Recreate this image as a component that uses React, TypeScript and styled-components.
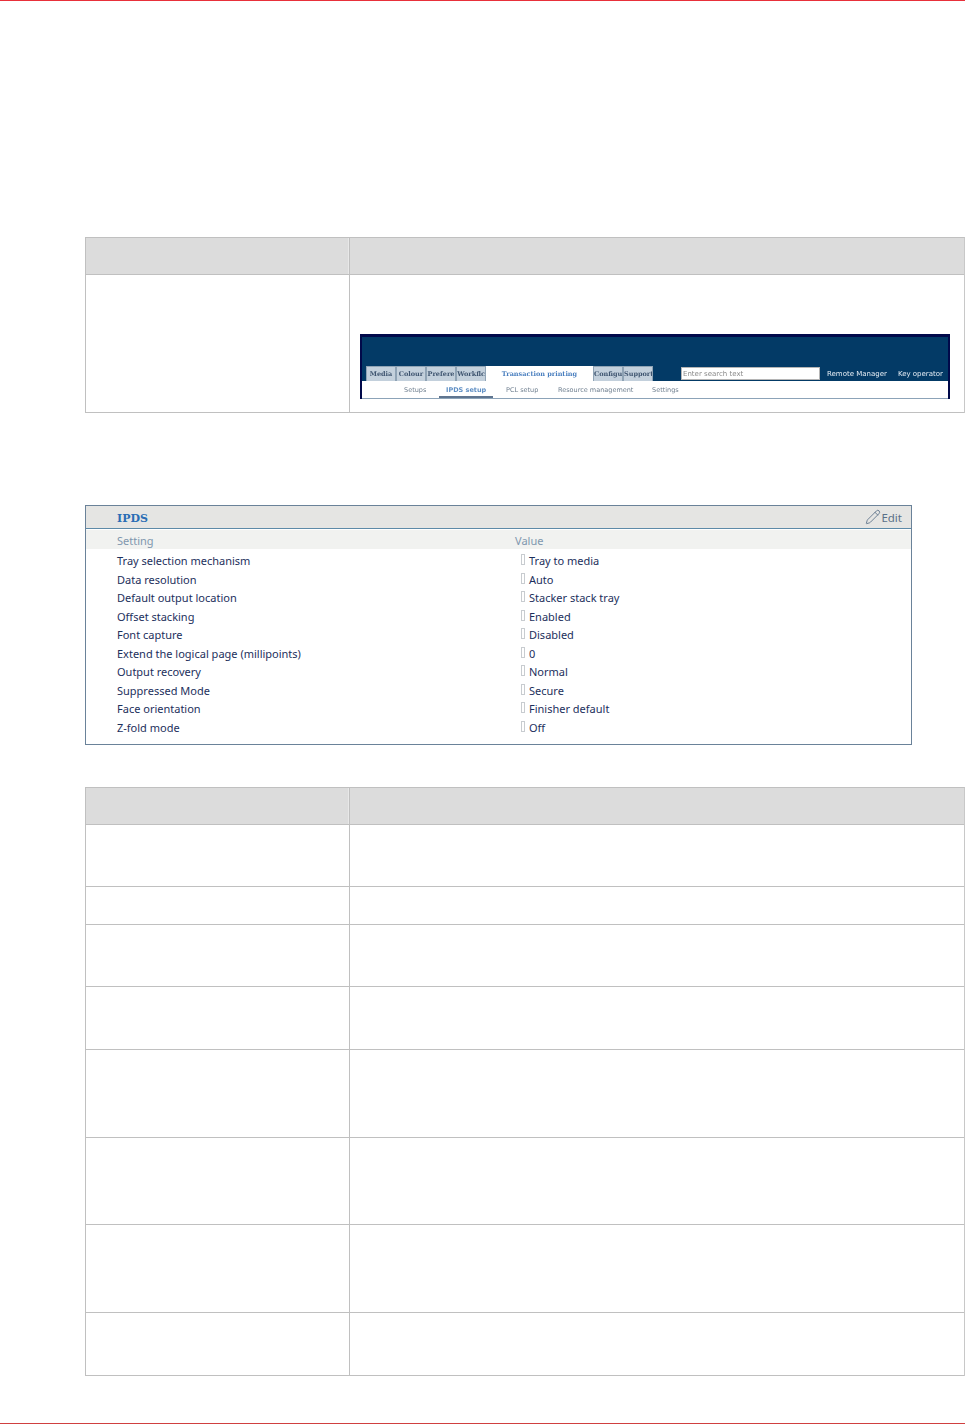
import React from 'react';
import styled, { createGlobalStyle } from 'styled-components';
import { Pencil } from 'lucide-react';

const settings = [
  ['Tray selection mechanism', 'Tray to media'],
  ['Data resolution', 'Auto'],
  ['Default output location', 'Stacker stack tray'],
  ['Offset stacking', 'Enabled'],
  ['Font capture', 'Disabled'],
  ['Extend the logical page (millipoints)', '0'],
  ['Output recovery', 'Normal'],
  ['Suppressed Mode', 'Secure'],
  ['Face orientation', 'Finisher default'],
  ['Z-fold mode', 'Off'],
];

const mainTabs = ['Media', 'Colour', 'Prefere', 'Workflc'];
const sideTabs = ['Configu', 'Support'];
const subNav = [
  { label: 'Setups', width: 35, after: 0, active: false },
  { label: 'IPDS setup', width: 54, after: 13, active: true },
  { label: 'PCL setup', width: 52, after: 0, active: false },
  { label: 'Resource management', width: 94, after: 0, active: false },
  { label: 'Settings', width: 60, after: 0, active: false },
];

const rowHeights = [62, 38, 62, 63, 88, 87, 88, 63];

const GlobalStyle = createGlobalStyle`
  html, body {
    margin: 0;
    padding: 0;
    background: #fff;
  }
`;

const Page = styled.div`
  width: 965px;
  height: 1424px;
  box-sizing: border-box;
  display: flex;
  flex-direction: column;
  overflow: hidden;
  font-family: 'Noto Sans', sans-serif;
  border-top: 1px solid #e8303a;
  border-bottom: 1px solid #d04040;
`;

const Table = styled.div<{ $top: number }>`
  margin: ${(p) => p.$top}px 0 0 85px;
  width: 880px;
  box-sizing: border-box;
  border-top: 1px solid #c0c0c0;
  border-left: 1px solid #c0c0c0;
  border-right: 1px solid #c8c8c8;
`;

const Row = styled.div<{ $height: number; $head?: boolean }>`
  display: grid;
  grid-template-columns: 263px 1fr;
  height: ${(p) => p.$height}px;
  box-sizing: border-box;
  border-bottom: 1px solid #c0c0c0;
  background: ${(p) => (p.$head ? '#dcdcdc' : '#fff')};
`;

const Cell = styled.div<{ $head?: boolean }>`
  border-left: 1px solid #c0c0c0;
  box-shadow: ${(p) => (p.$head ? '-1px 0 0 #e8e8e8' : 'none')};
  &:first-child {
    border-left: none;
    box-shadow: none;
  }
`;

const ShotCell = styled(Cell)`
  padding: 59px 0 0 10px;
`;

const Shot = styled.div`
  width: 590px;
  height: 65px;
  box-sizing: border-box;
  background: #033a66;
  border: solid #01094a;
  border-width: 3px 2px 0;
  padding-top: 29px;
  display: flex;
  flex-direction: column;
  font-family: 'DejaVu Sans', sans-serif;
  font-size: 7px;
  filter: blur(0.35px);
`;

const TabBar = styled.div`
  height: 15px;
  display: flex;
  padding-left: 4px;
  align-items: stretch;
`;

const Tab = styled.div`
  width: 30px;
  box-sizing: border-box;
  background: #c3d0dc;
  border: 1px solid #8fa3b5;
  border-bottom: none;
  color: #3f5570;
  font-family: 'DejaVu Serif', serif;
  font-weight: bold;
  font-size: 6.5px;
  line-height: 15px;
  text-align: center;
  white-space: nowrap;
  overflow: hidden;
`;

const ActiveTab = styled.div`
  width: 107px;
  background: #fff;
  color: #4a7fbf;
  font-family: 'DejaVu Serif', serif;
  font-weight: bold;
  font-size: 6.5px;
  line-height: 17px;
  text-align: center;
`;

const SearchBox = styled.div`
  width: 139px;
  height: 13px;
  margin: 1px 0 0 28px;
  box-sizing: border-box;
  background: #fff;
  border: 1px solid #b5b5b5;
  color: #8a8a8a;
  font-size: 7px;
  line-height: 12px;
  padding-left: 1px;
`;

const TopLink = styled.span<{ $left: number }>`
  margin-left: ${(p) => p.$left}px;
  color: #e4ecf4;
  font-size: 7px;
  line-height: 17px;
  white-space: nowrap;
`;

const SubNav = styled.div`
  height: 18px;
  box-sizing: border-box;
  background: #fff;
  border-bottom: 1px solid #8ca3b8;
  display: flex;
  padding-left: 42px;
`;

const SubItem = styled.div<{ $active: boolean; $width: number; $after: number }>`
  width: ${(p) => p.$width}px;
  margin-right: ${(p) => p.$after}px;
  flex: none;
  box-sizing: border-box;
  color: ${(p) => (p.$active ? '#5f8fc4' : '#6f7f8f')};
  font-weight: ${(p) => (p.$active ? 'bold' : 'normal')};
  font-size: 6.5px;
  line-height: 18px;
  white-space: nowrap;
  padding-left: ${(p) => (p.$active ? 7 : 0)}px;
  border-bottom: ${(p) => (p.$active ? '2px solid #5f7590' : 'none')};
  height: 17px;
`;

const Panel = styled.section`
  margin: 92px 0 0 85px;
  width: 827px;
  height: 240px;
  box-sizing: border-box;
  border: 1px solid #6a8299;
  color: #1c2f5c;
  font-size: 11px;
`;

const PanelHead = styled.header`
  height: 23px;
  box-sizing: border-box;
  background: #e5e5e3;
  border-bottom: 1px solid #5d8aa8;
  display: flex;
  align-items: center;
  justify-content: space-between;
  padding: 0 9px 0 31px;
`;

const PanelTitle = styled.h2`
  margin: 2px 0 0;
  color: #2a6db5;
  font-family: 'DejaVu Serif', serif;
  font-size: 11px;
  font-weight: bold;
`;

const EditLink = styled.span`
  display: flex;
  align-items: center;
  color: #5a7088;
  font-size: 11.5px;
`;

const ColumnHead = styled.div`
  margin-top: 1px;
  height: 19px;
  background: #f1f2f0;
  display: grid;
  grid-template-columns: 398px 1fr;
  padding-left: 31px;
  color: #8097ae;
  line-height: 22px;
`;

const SettingRow = styled.div`
  display: grid;
  grid-template-columns: 404px 1fr;
  padding-left: 31px;
  height: 18.55px;
  line-height: 19.5px;
  white-space: nowrap;
`;

const SettingValue = styled.span`
  position: relative;
  padding-left: 8px;
  &::before {
    content: '';
    position: absolute;
    left: 0;
    top: 3px;
    width: 4px;
    height: 11px;
    box-sizing: border-box;
    border: 1px solid #c8ccd0;
  }
`;

const SettingList = styled.div`
  padding-top: 2px;
`;

export default function App() {
  return (
    <Page>
      <GlobalStyle />
      <Table $top={236}>
        <Row $height={37} $head>
          <Cell $head />
          <Cell $head />
        </Row>
        <Row $height={138}>
          <Cell />
          <ShotCell>
            <Shot>
              <TabBar>
                {mainTabs.map((t) => (
                  <Tab key={t}>{t}</Tab>
                ))}
                <ActiveTab>Transaction printing</ActiveTab>
                {sideTabs.map((t) => (
                  <Tab key={t}>{t}</Tab>
                ))}
                <SearchBox>Enter search text</SearchBox>
                <TopLink $left={7}>Remote Manager</TopLink>
                <TopLink $left={11}>Key operator</TopLink>
              </TabBar>
              <SubNav>
                {subNav.map((s) => (
                  <SubItem key={s.label} $active={s.active} $width={s.width} $after={s.after}>
                    {s.label}
                  </SubItem>
                ))}
              </SubNav>
            </Shot>
          </ShotCell>
        </Row>
      </Table>

      <Panel>
        <PanelHead>
          <PanelTitle>IPDS</PanelTitle>
          <EditLink>
            <Pencil size={16} strokeWidth={1.3} />
            Edit
          </EditLink>
        </PanelHead>
        <ColumnHead>
          <span>Setting</span>
          <span>Value</span>
        </ColumnHead>
        <SettingList>
          {settings.map(([name, value]) => (
            <SettingRow key={name}>
              <span>{name}</span>
              <SettingValue>{value}</SettingValue>
            </SettingRow>
          ))}
        </SettingList>
      </Panel>

      <Table $top={42}>
        <Row $height={37} $head>
          <Cell $head />
          <Cell $head />
        </Row>
        {rowHeights.map((h, i) => (
          <Row key={i} $height={h}>
            <Cell />
            <Cell />
          </Row>
        ))}
      </Table>
    </Page>
  );
}
